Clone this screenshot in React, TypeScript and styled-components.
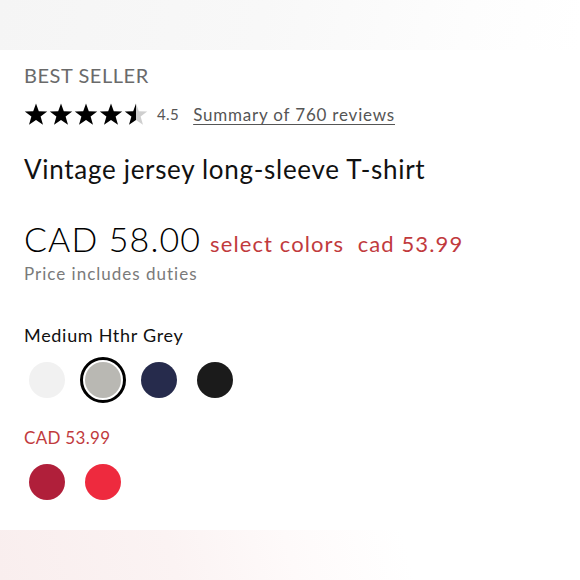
import { FC } from "react";
import styled, { createGlobalStyle } from "styled-components";

const GlobalStyle = createGlobalStyle`
	html, body {
		margin: 0;
		padding: 0;
		background: #fff;
	}
	body {
		font-family: Lato, "Noto Sans", "Liberation Sans", sans-serif;
		color: #111;
	}
`;

const mainSwatches = [
	{ name: "white", color: "#f1f1f1" },
	{ name: "grey", color: "#b9b8b3", selected: true },
	{ name: "navy", color: "#262b4c" },
	{ name: "black", color: "#1b1b1b" },
];

const saleSwatches = [
	{ name: "berry", color: "#b01f3a" },
	{ name: "red", color: "#ee2a3e" },
];

const Star: FC<{ fill: "full" | "half" }> = ({ fill }) => (
	<svg width='24' height='23' viewBox='0 0 24 23'>
		<defs>
			<linearGradient id='half-star'>
				<stop offset='50%' stopColor='#000' />
				<stop offset='50%' stopColor='#cfcfcf' />
			</linearGradient>
		</defs>
		<path
			d='M12 0.5 L14.8 8.3 L23.2 8.5 L16.6 13.6 L19 21.8 L12 17 L5 21.8 L7.4 13.6 L0.8 8.5 L9.2 8.3 Z'
			fill={fill === "full" ? "#000" : "url(#half-star)"}
		/>
	</svg>
);

export default function App() {
	return (
		<Page>
			<GlobalStyle />
			<TopFade />
			<Content>
				<Badge>BEST SELLER</Badge>
				<RatingRow>
					<Stars>
						<Star fill='full' />
						<Star fill='full' />
						<Star fill='full' />
						<Star fill='full' />
						<Star fill='half' />
					</Stars>
					<Score>4.5</Score>
					<ReviewLink href='#'>Summary of 760 reviews</ReviewLink>
				</RatingRow>
				<Title>Vintage jersey long-sleeve T-shirt</Title>
				<PriceRow>
					<Price>CAD 58.00</Price>
					<SaleNote>select colors&nbsp; cad 53.99</SaleNote>
				</PriceRow>
				<Duties>Price includes duties</Duties>
				<ColorName>Medium Hthr Grey</ColorName>
				<SwatchRow>
					{mainSwatches.map((s) => (
						<Swatch key={s.name} $color={s.color} $selected={!!s.selected} aria-label={s.name} />
					))}
				</SwatchRow>
				<SalePrice>CAD 53.99</SalePrice>
				<SwatchRow>
					{saleSwatches.map((s) => (
						<Swatch key={s.name} $color={s.color} $selected={false} aria-label={s.name} />
					))}
				</SwatchRow>
			</Content>
			<BottomFade />
		</Page>
	);
}

const Page = styled.div`
	width: 580px;
	height: 580px;
	display: flex;
	flex-direction: column;
	overflow: hidden;
`;

const TopFade = styled.div`
	height: 50px;
	flex-shrink: 0;
	background: linear-gradient(100deg, #f5f5f5 0%, #f8f8f8 45%, #fdfdfd 80%, #fff 100%);
`;

const BottomFade = styled.div`
	height: 50px;
	flex-shrink: 0;
	background: linear-gradient(75deg, #f9eeee 0%, #fbf3f3 30%, #fefafa 50%, #fff 70%);
`;

const Content = styled.div`
	flex: 1;
	padding: 13px 24px 0;
	display: flex;
	flex-direction: column;
`;

const Badge = styled.div`
	font-size: 20px;
	line-height: 24px;
	color: #6a6a6a;
	letter-spacing: 0.55px;
`;

const RatingRow = styled.div`
	display: flex;
	align-items: center;
	margin-top: 14px;
	height: 26px;
`;

const Stars = styled.div`
	display: flex;
	gap: 1px;
	svg {
		display: block;
	}
`;

const Score = styled.span`
	font-size: 15px;
	color: #555;
	margin-left: 9px;
	letter-spacing: 0.4px;
`;

const ReviewLink = styled.a`
	font-size: 17px;
	color: #555;
	margin-left: 14px;
	letter-spacing: 0.8px;
	text-decoration: underline;
	text-underline-offset: 3px;
`;

const Title = styled.h1`
	margin: 27px 0 0;
	font-size: 26px;
	font-weight: 400;
	line-height: 30px;
	color: #111;
	letter-spacing: 0.7px;
`;

const PriceRow = styled.div`
	display: flex;
	align-items: baseline;
	margin-top: 35px;
`;

const Price = styled.span`
	font-size: 34px;
	font-weight: 300;
	line-height: 40px;
	color: #000;
	letter-spacing: 1.1px;
`;

const SaleNote = styled.span`
	font-size: 22px;
	color: #c13a3d;
	margin-left: 9px;
	letter-spacing: 1.1px;
`;

const Duties = styled.div`
	font-size: 17px;
	color: #7a7a7a;
	margin-top: 4px;
	letter-spacing: 1px;
`;

const ColorName = styled.div`
	font-size: 18px;
	color: #111;
	margin-top: 40px;
	letter-spacing: 0.7px;
`;

const SwatchRow = styled.div`
	display: flex;
	gap: 10px;
	margin-top: 11px;
`;

const Swatch = styled.button<{ $color: string; $selected: boolean }>`
	width: 46px;
	height: 46px;
	border-radius: 50%;
	border: 3px solid ${(p) => (p.$selected ? "#000" : "transparent")};
	background: ${(p) => p.$color};
	background-clip: content-box;
	box-sizing: border-box;
	padding: 2px;
	cursor: pointer;
`;

const SalePrice = styled.div`
	font-size: 17px;
	color: #c13a3d;
	margin-top: 24px;
	letter-spacing: 0.3px;
`;
